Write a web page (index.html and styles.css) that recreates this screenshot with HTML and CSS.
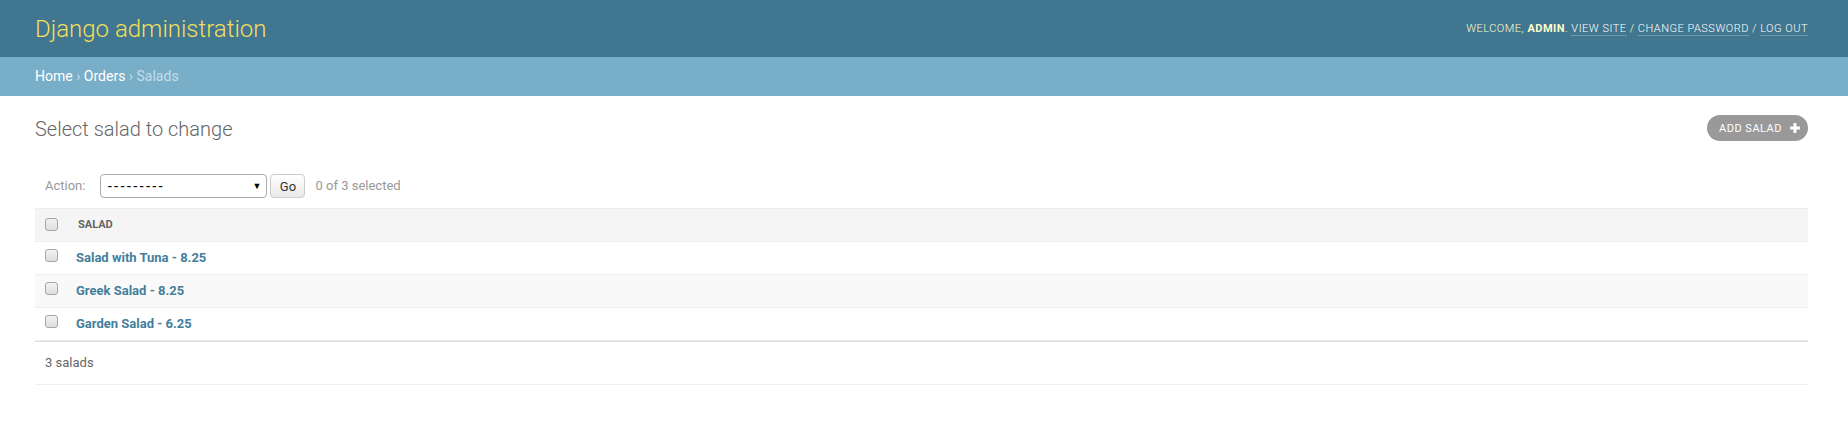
FILE: index.html
```html
<!DOCTYPE html>
<html lang="en">
<head>
<meta charset="utf-8">
<title>Select salad to change | Django site admin</title>
<link rel="stylesheet" href="styles.css">
</head>
<body>
<div class="container">
  <header class="header">
    <div class="branding"><h1 class="site-name"><a href="#">Django administration</a></h1></div>
    <div class="user-tools">Welcome, <strong>admin</strong>. <a href="#">View site</a> / <a href="#">Change password</a> / <a href="#">Log out</a></div>
  </header>
  <div class="breadcrumbs"><a href="#">Home</a> › <a href="#">Orders</a> › Salads</div>
  <main class="content">
    <div class="title-row">
      <h1 class="page-title">Select salad to change</h1>
      <a href="#" class="addlink">Add salad
        <svg class="plus" width="10" height="10" viewBox="0 0 10 10"><rect x="3.5" y="0" width="3" height="10" fill="#fff"/><rect x="0" y="3.5" width="10" height="3" fill="#fff"/></svg>
      </a>
    </div>
    <form class="changelist-form">
      <div class="actions">
        <label class="action-label">Action:</label>
        <span class="select-wrap">
          <select class="action-select" name="action">
            <option>---------</option>
            <option>Delete selected salads</option>
          </select>
          <span class="select-arrow">▼</span>
        </span>
        <button type="button" class="go-button">Go</button>
        <span class="action-counter">0 of 3 selected</span>
      </div>
      <table class="result-list">
        <thead>
          <tr>
            <th class="action-checkbox-column"><div class="text"><span><input type="checkbox" class="cb"></span></div></th>
            <th class="column-name"><div class="text"><span>Salad</span></div></th>
          </tr>
        </thead>
        <tbody>
          <tr class="row1"><td class="action-checkbox"><input type="checkbox" class="cb"></td><th class="field-name"><a href="#">Salad with Tuna - 8.25</a></th></tr>
          <tr class="row2"><td class="action-checkbox"><input type="checkbox" class="cb"></td><th class="field-name"><a href="#">Greek Salad - 8.25</a></th></tr>
          <tr class="row1"><td class="action-checkbox"><input type="checkbox" class="cb"></td><th class="field-name"><a href="#">Garden Salad - 6.25</a></th></tr>
        </tbody>
      </table>
      <p class="paginator">3 salads</p>
    </form>
  </main>
</div>
</body>
</html>
```
FILE: styles.css
```css
html, body {
  margin: 0;
  padding: 0;
}
body {
  font-family: "Roboto", "Liberation Sans", Arial, sans-serif;
  font-size: 14px;
  color: #333;
  background: #fff;
}
a {
  color: #447e9b;
  text-decoration: none;
}

/* Header */
.header {
  height: 57px;
  box-sizing: border-box;
  padding: 0 40px 0 35px;
  background: #417690;
  color: #ffc;
  display: flex;
  align-items: center;
  justify-content: space-between;
}
.site-name {
  margin: 0;
  padding: 0;
  font-size: 24px;
  font-weight: 300;
  line-height: 30px;
}
.site-name a {
  color: #f2df5c;
}
.user-tools {
  font-size: 11px;
  font-weight: 300;
  letter-spacing: 0.5px;
  text-transform: uppercase;
  margin-top: 1px;
  line-height: 16px;
}
.user-tools strong {
  font-weight: 700;
}
.user-tools a {
  color: #fff;
  border-bottom: 1px solid rgba(255, 255, 255, 0.25);
}

/* Breadcrumbs */
.breadcrumbs {
  height: 39px;
  box-sizing: border-box;
  padding: 0 35px;
  line-height: 39px;
  background: #79aec8;
  color: #c4dce8;
  font-size: 14px;
}
.breadcrumbs a {
  color: #fff;
}

/* Content */
.content {
  display: block;
  padding: 21px 40px 0 35px;
}
.title-row {
  display: flex;
  justify-content: space-between;
  align-items: flex-start;
  height: 24px;
  margin-bottom: 23px;
}
.page-title {
  margin: 0;
  font-size: 20px;
  font-weight: 300;
  line-height: 24px;
  color: #666;
}
.addlink {
  margin-top: -2px;
  height: 26px;
  box-sizing: border-box;
  display: flex;
  align-items: center;
  gap: 8px;
  padding: 0 8px 0 12px;
  background: #999;
  color: #fff;
  border-radius: 15px;
  font-size: 11px;
  font-weight: 400;
  letter-spacing: 0.5px;
  text-transform: uppercase;
}
.plus {
  display: block;
}

/* Actions */
.actions {
  padding: 10px;
  line-height: 24px;
  color: #999;
  font-size: 13px;
  display: flex;
  align-items: flex-start;
}
.action-label {
  font-size: 13px;
}
.select-wrap {
  position: relative;
  display: inline-block;
  margin-left: 15px;
}
.action-select {
  -webkit-appearance: none;
  appearance: none;
  display: block;
  width: 167px;
  height: 24px;
  box-sizing: border-box;
  margin: 0;
  padding: 0 0 0 6px;
  border: 1px solid #aaa;
  border-radius: 4px;
  background: #fff;
  color: #000;
  font-family: "Liberation Sans", Arial, sans-serif;
  font-size: 14px;
  letter-spacing: 1.7px;
}
.select-arrow {
  position: absolute;
  right: 6px;
  top: 0;
  font-size: 9px;
  line-height: 24px;
  color: #000;
  pointer-events: none;
}
.go-button {
  margin: 0 0 0 3px;
  width: 35px;
  height: 24px;
  box-sizing: border-box;
  padding: 0;
  border: 1px solid #ccc;
  border-radius: 4px;
  background: linear-gradient(#fff, #e9e9e9);
  color: #333;
  font-family: "Roboto", Arial, sans-serif;
  font-size: 13px;
  line-height: 1;
  cursor: pointer;
}
.action-counter {
  margin-left: 10px;
  font-size: 13px;
}

/* Table */
.result-list {
  width: 100%;
  border-collapse: collapse;
}
.result-list td,
.result-list th {
  font-size: 13px;
  line-height: 16px;
  border-bottom: 1px solid #eee;
  vertical-align: top;
  padding: 8px;
  text-align: left;
}
.result-list thead th {
  padding: 0;
  background: #f5f5f5;
  border-top: 1px solid #eee;
  border-bottom: 1px solid #eee;
  color: #666;
  font-size: 11px;
  font-weight: 700;
  text-transform: uppercase;
  white-space: nowrap;
  vertical-align: middle;
}
.result-list thead th .text span {
  display: block;
  padding: 8px 10px;
}
.result-list thead th.action-checkbox-column {
  width: 33px;
}
.result-list td.action-checkbox {
  text-align: center;
  width: 17px;
}
.result-list tbody th {
  font-weight: 700;
}
.result-list tbody th a {
  color: #447e9b;
}
.row1 {
  background: #fff;
}
.row2 {
  background: #f9f9f9;
}
.cb {
  -webkit-appearance: none;
  appearance: none;
  display: block;
  width: 13px;
  height: 13px;
  margin: -2px 0 0 0;
  box-sizing: border-box;
  border: 1px solid #a6a6a6;
  border-radius: 3px;
  background: linear-gradient(#f3f3f3, #dedede);
}
.action-checkbox .cb {
  margin: -1px auto 0;
}

/* Paginator */
.paginator {
  margin: 0;
  padding: 10px;
  line-height: 22px;
  font-size: 13px;
  color: #666;
  border-top: 1px solid #ddd;
  border-bottom: 1px solid #eee;
}
```
